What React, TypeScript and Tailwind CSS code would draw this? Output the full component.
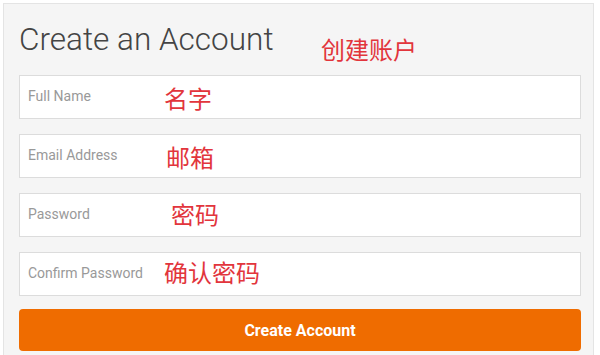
const fields = [
  { placeholder: "Full Name", note: "名字", noteClass: "left-[144px] top-[7px]" },
  { placeholder: "Email Address", note: "邮箱", noteClass: "left-[146px] top-[7px]" },
  { placeholder: "Password", note: "密码", noteClass: "left-[151px] top-[5px]" },
  { placeholder: "Confirm Password", note: "确认密码", noteClass: "left-[144px] top-[4px]" },
];

const noteFont = "font-['Noto_Sans_CJK_SC',sans-serif] text-[24px] leading-[30px] text-[#e2353c]";

export default function App() {
  return (
    <div className="w-[600px] h-[355px] overflow-hidden bg-white pt-[3px] pl-[3px] pr-[6px] font-['Roboto',sans-serif]">
      <div className="relative h-full bg-[#f5f5f5] border-t border-l border-r border-[#e4e4e4] pl-[15px] pr-[12px] pt-[17px]">
        {/* Header */}
        <h1 className="text-[31.5px] leading-[38px] font-light text-[#444]">Create an Account</h1>
        <span className={`absolute left-[317px] top-[30px] ${noteFont}`}>创建账户</span>

        {/* Form */}
        <div className="mt-[16px] flex flex-col gap-[15px]">
          {fields.map((f) => (
            <div
              key={f.placeholder}
              className="relative h-[44px] bg-white border border-[#dcdcdc] pl-[8px] pt-[8px]"
            >
              <span className="text-[14px] leading-[20px] text-[#999]">{f.placeholder}</span>
              <span className={`absolute ${f.noteClass} ${noteFont}`}>{f.note}</span>
            </div>
          ))}
        </div>

        <button className="mt-[13px] w-full h-[42px] rounded-[4px] bg-[#ef6c00] text-white text-[16px] font-bold pt-[2px]">
          Create Account
        </button>
      </div>
    </div>
  );
}
